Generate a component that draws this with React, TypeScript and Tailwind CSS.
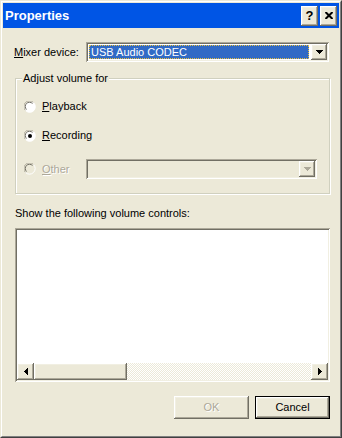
import React from 'react';

const raised =
  'bg-[#ECE9D8] shadow-[inset_-1px_-1px_#716F64,inset_1px_1px_#FFFFFF,inset_-2px_-2px_#ACA899,inset_2px_2px_#F1EFE2]';
const sunken =
  'shadow-[inset_1px_1px_#ACA899,inset_-1px_-1px_#FFFFFF,inset_2px_2px_#716F64,inset_-2px_-2px_#F1EFE2]';

function Arrow({ dir, color = '#000' }: { dir: 'down' | 'left' | 'right'; color?: string }) {
  const pts =
    dir === 'down' ? '0,0 7,0 3.5,4' : dir === 'left' ? '4,0 4,7 0,3.5' : '0,0 0,7 4,3.5';
  const w = dir === 'down' ? 7 : 4;
  const h = dir === 'down' ? 4 : 7;
  return (
    <svg width={w} height={h} viewBox={`0 0 ${w} ${h}`}>
      <polygon points={pts} fill={color} shapeRendering="crispEdges" />
    </svg>
  );
}

function Radio({ checked, disabled }: { checked?: boolean; disabled?: boolean }) {
  return (
    <svg width="12" height="12" viewBox="0 0 12 12" className="shrink-0">
      <circle cx="6" cy="6" r="5.5" fill={disabled ? '#ECE9D8' : '#fff'} />
      <path d="M1.5 9.5 A5.5 5.5 0 0 1 9.5 1.5" stroke="#ACA899" fill="none" />
      <path d="M2.5 8.5 A4.2 4.2 0 0 1 8.5 2.5" stroke="#716F64" fill="none" />
      <path d="M9.5 1.5 A5.5 5.5 0 0 1 1.5 9.5" stroke="#fff" fill="none" />
      {checked && <circle cx="6" cy="6" r="2" fill="#000" />}
    </svg>
  );
}

function Combo({ width, disabled, value }: { width: string; disabled?: boolean; value?: string }) {
  return (
    <div className={`${width} h-[20px] p-[2px] flex ${sunken} ${disabled ? 'bg-[#ECE9D8]' : 'bg-white'}`}>
      <div className="flex-1 pl-px pr-[2px] py-px">
        {value && (
          <div className="h-full bg-[#316AC5] outline-1 outline-dotted outline-[#E8C040] -outline-offset-1 text-white text-[11px] leading-[14px] pl-[2px]">
            {value}
          </div>
        )}
      </div>
      <div className={`w-[16px] h-[16px] flex items-center justify-center ${raised}`}>
        <Arrow dir="down" color={disabled ? '#ACA899' : '#000'} />
      </div>
    </div>
  );
}

function Button({ label, def, disabled }: { label: string; def?: boolean; disabled?: boolean }) {
  return (
    <div className={`w-[75px] h-[23px] ${def ? 'border border-black' : ''}`}>
      <div
        className={`w-full h-full flex items-center justify-center text-[11px] ${raised} ${
          disabled ? 'text-[#ACA899] [text-shadow:1px_1px_0_#fff]' : 'text-black'
        }`}
      >
        {label}
      </div>
    </div>
  );
}

export default function App() {
  return (
    <div
      className="w-[342px] h-[438px] border border-t-[#ECE9D8] border-l-[#ECE9D8] border-r-[#404040] border-b-[#404040] bg-[#ECE9D8]"
      style={{ fontFamily: '"Liberation Sans", Arial, sans-serif' }}
    >
      <div className="h-full border border-t-white border-l-white border-r-[#808080] border-b-[#808080] p-px flex flex-col">
        {/* title bar */}
        <div className="h-[25px] bg-[#0055E5] flex items-center pl-[2px] pr-[2px]">
          <span className="text-white font-bold text-[13px] flex-1">Properties</span>
          <div className={`w-[17px] h-[20px] flex items-center justify-center ${raised}`}>
            <span className="text-black font-bold text-[13px] leading-none">?</span>
          </div>
          <div className={`ml-[2px] w-[17px] h-[20px] flex items-center justify-center ${raised}`}>
            <svg width="8" height="7" viewBox="0 0 8 7">
              <path d="M0.5 0 L7.5 7 M7.5 0 L0.5 7" stroke="#000" strokeWidth="2" />
            </svg>
          </div>
        </div>

        <div className="flex flex-col text-[11px] text-black">
          {/* mixer device */}
          <div className="mt-[14px] pl-[11px] flex items-center h-[20px]">
            <span className="w-[72px]">
              <span className="underline">M</span>ixer device:
            </span>
            <Combo width="w-[243px]" value="USB Audio CODEC" />
          </div>

          {/* group box */}
          <div className="mt-[16px] ml-[12px] w-[315px] h-[116px] relative border border-[#D0D0BF] shadow-[inset_1px_1px_#fff,1px_1px_#fff]">
            <span className="absolute left-[6px] -top-[7px] px-px bg-[#ECE9D8] leading-[13px]">Adjust volume for</span>
            <div className="mt-[21px] pl-[8px] flex items-center gap-[6px] h-[13px]">
              <Radio />
              <span>
                <span className="underline">P</span>layback
              </span>
            </div>
            <div className="mt-[16px] pl-[8px] flex items-center gap-[6px] h-[13px]">
              <Radio checked />
              <span>
                <span className="underline">R</span>ecording
              </span>
            </div>
            <div className="mt-[17px] pl-[8px] flex items-center h-[20px]">
              <Radio disabled />
              <span className="ml-[6px] w-[44px] text-[#ACA899] [text-shadow:1px_1px_0_#fff]">
                <span className="underline">O</span>ther
              </span>
              <Combo width="w-[231px]" disabled />
            </div>
          </div>

          <div className="mt-[13px] pl-[12px] h-[13px] leading-[13px]">Show the following volume controls:</div>

          {/* list box */}
          <div className={`mt-[8px] ml-[12px] w-[315px] h-[154px] p-[2px] bg-white flex flex-col ${sunken}`}>
            <div className="flex-1" />
            <div className="h-[17px] flex">
              <div className={`w-[17px] h-[17px] flex items-center justify-center ${raised}`}>
                <Arrow dir="left" />
              </div>
              <div className={`w-[93px] h-[17px] ${raised}`} />
              <div className="flex-1 bg-[repeating-conic-gradient(#ECE9D8_0%_25%,#FFFFFF_0%_50%)] bg-[length:2px_2px]" />
              <div className={`w-[17px] h-[17px] flex items-center justify-center ${raised}`}>
                <Arrow dir="right" />
              </div>
            </div>
          </div>

          {/* buttons */}
          <div className="mt-[14px] flex justify-end gap-[6px] pr-[9px]">
            <Button label="OK" disabled />
            <Button label="Cancel" def />
          </div>
        </div>
      </div>
    </div>
  );
}
